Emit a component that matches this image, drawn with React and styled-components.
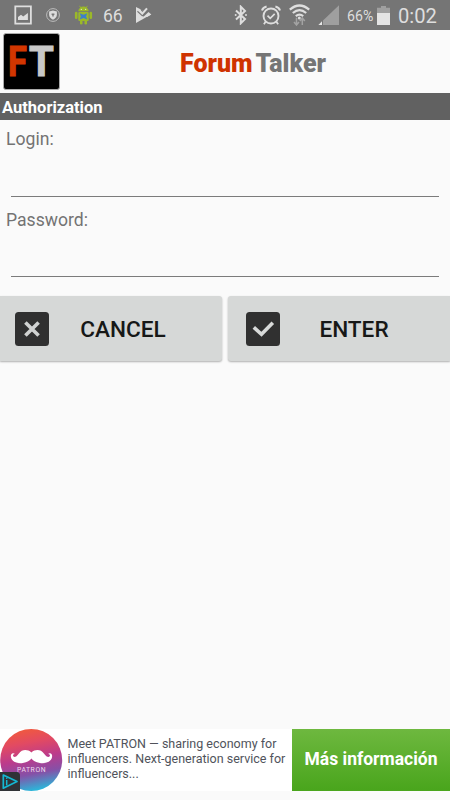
import React, { useState } from "react";
import styled, { createGlobalStyle } from "styled-components";

const App = () => {
  const [input, setInput] = useState({
    login: "",
    password: "",
  });

  const handleChangeInput = (e) => {
    setInput((prev) => {
      return {
        ...prev,
        [e.target.name]: e.target.value,
      };
    });
  };

  const handleCancel = () => {
    setInput({ login: "", password: "" });
  };

  return (
    <>
      <GlobalStyle />
      <Page>
        <StatusBar>
          <StatusGroup>
            <ImageIcon />
            <ShieldIcon />
            <AndroidIcon />
            <StatusText $size={19} $left={10} $width={19} $squeeze={0.92}>66</StatusText>
            <PlayCheckIcon />
          </StatusGroup>
          <StatusGroup>
            <BluetoothIcon />
            <AlarmIcon />
            <WifiIcon />
            <SignalIcon />
            <StatusText $size={14.6} $left={7} $width={28} $squeeze={0.97}>66%</StatusText>
            <BatteryIcon />
            <StatusText $size={20.6} $left={8} $width={39} $squeeze={0.98}>0:02</StatusText>
          </StatusGroup>
        </StatusBar>

        <Header>
          <Logo><span>F</span><span>T</span></Logo>
          <Title><b>Forum</b><b>Talker</b></Title>
        </Header>

        <SectionBar>Authorization</SectionBar>

        <Form>
          <Label htmlFor="login">Login:</Label>
          <Input
            type="text"
            id="login"
            name="login"
            value={input.login}
            onChange={handleChangeInput}
          />
          <Label htmlFor="password">Password:</Label>
          <Input
            type="password"
            id="password"
            name="password"
            value={input.password}
            onChange={handleChangeInput}
          />
        </Form>

        <Buttons>
          <CancelButton type="button" onClick={handleCancel}>
            <CancelIcon />
            <span>CANCEL</span>
          </CancelButton>
          <EnterButton type="button">
            <EnterIcon />
            <span>ENTER</span>
          </EnterButton>
        </Buttons>

        <Ad>
          <PatronLogo />
          <AdText>
            Meet PATRON — sharing economy for<br />
            influencers. Next-generation service for<br />
            influencers...
          </AdText>
          <AdButton>Más información</AdButton>
          <AdChoices />
        </Ad>
      </Page>
    </>
  );
};

export default App;

const ImageIcon = () => (
  <StatusIcon $left={14} width="18" height="20" viewBox="0 0 18 20">
    <path d="M1.3 1.3h15.6v17.4H1.3z" fill="none" stroke="#dedede" strokeWidth="1.8" />
    <path d="M4 15V12l3-2.2 2.2 1.8L13.9 8v7z" fill="#dedede" />
  </StatusIcon>
);

const ShieldIcon = () => (
  <StatusIcon $left={14} width="14" height="14" viewBox="0 0 14 14">
    <circle cx="7" cy="7" r="6.4" fill="none" stroke="#bcbcbc" strokeWidth="1" />
    <path d="M7 2.6l3.9 1v3c0 2.3-1.5 4.1-3.9 5.1-2.4-1-3.9-2.8-3.9-5.1v-3z" fill="#dcdcdc" />
    <path d="M5.6 5.4h2.8v1.5H7.7v1.6H6.3V6.9h-.7z" fill="#777" />
  </StatusIcon>
);

const AndroidIcon = () => (
  <StatusIcon $left={14} width="19" height="20" viewBox="0 0 19 20">
    <g fill="#9bb928">
      <path d="M4.3 6.3a5.2 4.7 0 0 1 10.4 0z" />
      <path d="M5.5.8l1.7 2.4M13.5.8l-1.7 2.4" stroke="#9bb928" strokeWidth=".9" />
      <rect x="4.3" y="7" width="10.4" height="9" rx="1" />
      <rect x=".9" y="6.8" width="2.6" height="7.2" rx="1.3" />
      <rect x="15.5" y="6.8" width="2.6" height="7.2" rx="1.3" />
      <rect x="6" y="14" width="2.5" height="5.5" rx="1.2" />
      <rect x="10.5" y="14" width="2.5" height="5.5" rx="1.2" />
    </g>
    <circle cx="7.3" cy="4.3" r=".6" fill="#eee" />
    <circle cx="11.7" cy="4.3" r=".6" fill="#eee" />
    <path d="M5.8 8.3l3.7 1.5 3.7-1.5-1.1 3.2 1.2 3-3.8-1.4-3.8 1.4 1.2-3z" fill="#3f80c8" />
  </StatusIcon>
);

const PlayCheckIcon = () => (
  <StatusIcon $left={13} width="17" height="18" viewBox="0 0 17 18">
    <path d="M1 1l15 7.6L1 17z" fill="#dedede" />
    <path d="M4.4 0L7.6 4.4 11 1v2l5 4.5L8.5 11z" fill="#757575" />
    <path d="M2.5 5.2l4.8 4.4L14.3 3" fill="none" stroke="#757575" strokeWidth="1.2" />
    <path d="M3.3 3.6l4.1 3.8 4.6-5" fill="none" stroke="#dedede" strokeWidth="2.1" />
    <path d="M8.2 11l5.3-5 2.8 2.6-4.2 2.4z" fill="#dedede" />
  </StatusIcon>
);

const BluetoothIcon = () => (
  <StatusIcon $left={0} width="14" height="20" viewBox="0 0 14 20">
    <path
      d="M2 5.5l9 8.6-4.2 4.2V1.7L11 5.9l-9 8.6"
      fill="none"
      stroke="#dedede"
      strokeWidth="2"
    />
    <circle cx="1.7" cy="10" r="1" fill="#dedede" />
    <circle cx="12" cy="10" r="1" fill="#dedede" />
  </StatusIcon>
);

const AlarmIcon = () => (
  <StatusIcon $left={13} width="20" height="21" viewBox="0 0 20 21">
    <g fill="none" stroke="#dedede">
      <circle cx="10" cy="11" r="7.5" strokeWidth="1.9" />
      <path d="M6.5 10.7l2.7 2.6 4.5-4.5" strokeWidth="1.7" />
      <path d="M1 5.5q.8-3.1 4.6-4M19 5.5q-.8-3.1-4.6-4" strokeWidth="2" />
      <path d="M4.9 16.3l-2 2.9M15.1 16.3l2 2.9" strokeWidth="1.8" />
    </g>
  </StatusIcon>
);

const WifiIcon = () => (
  <StatusIcon $left={8} width="21" height="22" viewBox="0 0 21 22">
    <g fill="none" stroke="#dedede" strokeWidth="2.2">
      <path d="M.8 5.6q9.7-8.2 19.4 0" />
      <path d="M3.8 9q6.7-5.6 13.4 0" />
      <path d="M6.8 12.2q3.7-3 7.4 0" />
    </g>
    <circle cx="10.3" cy="14" r="1.5" fill="#dedede" />
    <g fill="none" stroke="#a3a3a3" strokeWidth="1.5">
      <path d="M7.5 13.7v7M5 18l2.5 3L10 18" />
      <path d="M13.3 21v-6.7M10.8 17l2.5-3 2.5 3" />
    </g>
  </StatusIcon>
);

const SignalIcon = () => (
  <StatusIcon $left={8} width="22" height="20" viewBox="0 0 22 20">
    <path d="M21 .3V20H5V15.5z" fill="#9f9f9f" />
    <path d="M4 16.3V20H.4z" fill="#e8e8e8" />
  </StatusIcon>
);

const BatteryIcon = () => (
  <StatusIcon $left={2} width="13" height="19" viewBox="0 0 13 19">
    <path d="M4 0h5v1.8h4V7H0V1.8h4z" fill="#9f9f9f" />
    <path d="M0 7h13v12H0z" fill="#e4e4e4" />
  </StatusIcon>
);

const CancelIcon = () => (
  <svg width="34" height="34" viewBox="0 0 34 34">
    <rect width="34" height="34" rx="3.5" fill="#303030" />
    <path d="M10.4 10.4l13.2 13.2M23.6 10.4L10.4 23.6" stroke="#d0d2d1" strokeWidth="3.6" />
  </svg>
);

const EnterIcon = () => (
  <svg width="34" height="34" viewBox="0 0 34 34">
    <rect width="34" height="34" rx="3.5" fill="#303030" />
    <path d="M7.8 15.3l7.7 7L26.8 10.8" fill="none" stroke="#d8dad9" strokeWidth="3.6" />
  </svg>
);

const PatronLogo = () => (
  <svg width="63" height="62" viewBox="0 0 63 62">
    <defs>
      <linearGradient id="patron" x1="0.4" y1="0" x2="0.6" y2="1">
        <stop offset="0" stopColor="#f0593f" />
        <stop offset="0.22" stopColor="#e24a62" />
        <stop offset="0.48" stopColor="#bb3b8c" />
        <stop offset="0.72" stopColor="#8650a7" />
        <stop offset="1" stopColor="#25bddd" />
      </linearGradient>
    </defs>
    <circle cx="31.2" cy="31" r="31" fill="url(#patron)" />
    <path
      d="M31.4 23.4c-4-3.4-9.4-3.2-12.5 1-2.3 3.1-4.1 4.3-5.4 3.2-1-.8-.5-2.5 1.4-2.5
        -1.8-1.9-4.6-.5-4 2.9.8 4.8 6.5 6.8 12 6 4.3-.7 7-2.3 8.5-4.4
        1.5 2.1 4.2 3.7 8.5 4.4 5.5.8 11.4-1.2 12.2-6 .6-3.4-2.2-4.8-4-2.9
        1.9 0 2.4 1.7 1.4 2.5-1.3 1.1-3.3-.1-5.6-3.2-3.1-4.2-8.5-4.4-12.5-1z"
      fill="#fff"
    />
    <text
      x="17"
      y="43"
      fontFamily="Roboto, sans-serif"
      fontSize="6.8"
      textLength="28.5"
      fill="#eed9ee"
    >
      PATRON
    </text>
  </svg>
);

const AdChoices = () => (
  <AdBadge width="20" height="19" viewBox="0 0 20 19">
    <path d="M0 0h16.5q3.5 0 3.5 3.5V19H0z" fill="#303236" />
    <path d="M3.3 3L17 9.6 3.3 16.2z" fill="none" stroke="#14b7d2" strokeWidth="1.7" strokeLinejoin="round" />
    <path d="M6.7 8v5.4" stroke="#14b7d2" strokeWidth="1.5" />
    <circle cx="6.7" cy="6.2" r=".8" fill="#14b7d2" />
  </AdBadge>
);

const GlobalStyle = createGlobalStyle`
  * {
    box-sizing: border-box;
  }

  body {
    margin: 0;
    background: #fafafa;
    font-family: Roboto, "Liberation Sans", sans-serif;
  }
`;

const Page = styled.div`
  display: flex;
  flex-direction: column;
  width: 450px;
  height: 800px;
  padding-bottom: 9px;
  background: #fafafa;
  overflow: hidden;
`;

const StatusBar = styled.div`
  display: flex;
  justify-content: space-between;
  flex: none;
  height: 30px;
  padding-right: 13px;
  background: #757575;
`;

const StatusGroup = styled.div`
  display: flex;
  align-items: center;
`;

const StatusIcon = styled.svg`
  display: block;
  flex: none;
  margin-left: ${(props) => props.$left}px;
`;

const StatusText = styled.span`
  flex: none;
  width: ${(props) => props.$width}px;
  margin-left: ${(props) => props.$left}px;
  padding-top: 1px;
  color: #dedede;
  font-size: ${(props) => props.$size}px;
  line-height: 32px;
  white-space: nowrap;
  transform: scaleX(${(props) => props.$squeeze});
  transform-origin: left;
`;

const Header = styled.header`
  display: flex;
  align-items: center;
  flex: none;
  height: 63px;
  padding-left: 3px;
`;

const Logo = styled.div`
  display: flex;
  width: 57px;
  height: 57px;
  padding-left: 4px;
  border: 1px solid #aaa;
  border-radius: 3px;
  background: #000;
  color: #c8c8c8;
  font-size: 43px;
  font-weight: 700;
  line-height: 55px;

  span {
    -webkit-text-stroke: 1.2px currentColor;
    transform-origin: left;
  }

  span:first-child {
    width: 21px;
    color: #d23600;
    transform: scaleX(0.8);
  }

  span:last-child {
    width: 25px;
    transform: scaleX(0.93);
  }
`;

const Title = styled.h1`
  display: flex;
  gap: 3px;
  margin: 5px 0 0 120px;
  color: #757575;
  font-size: 25px;
  line-height: 30px;

  b:first-child {
    color: #cf3300;
  }
`;

const SectionBar = styled.div`
  flex: none;
  height: 27px;
  padding-left: 2px;
  background: #616161;
  color: #fff;
  font-size: 16.5px;
  font-weight: 700;
  line-height: 29px;
`;

const Form = styled.form`
  display: flex;
  flex-direction: column;
  flex: none;
  padding: 9px 11px 0;
`;

const Label = styled.label`
  height: 21px;
  margin-left: -5px;
  color: #737373;
  font-size: 17.6px;
  line-height: 21px;
`;

const Input = styled.input`
  height: 47px;
  margin: 0 0 13px;
  padding: 0 4px;
  border: 0;
  border-bottom: 1px solid #7b7b7b;
  outline: 0;
  background: transparent;
  color: #212121;
  font: 18px Roboto, sans-serif;

  &:last-child {
    height: 46px;
  }
`;

const Buttons = styled.div`
  display: flex;
  gap: 6px;
  flex: none;
  margin-top: 6px;
`;

const Button = styled.button`
  display: flex;
  align-items: center;
  height: 65px;
  padding: 0;
  border: 0;
  background: #d6d8d7;
  box-shadow: 0 1px 2px rgba(0, 0, 0, 0.3);
  color: #171817;
  font: 500 22.6px Roboto, sans-serif;
  text-align: center;

  span {
    flex: 1;
    padding-top: 2px;
  }
`;

const CancelButton = styled(Button)`
  width: 222px;
  padding: 0 25px 0 15px;
  border-radius: 0 3px 3px 0;
`;

const EnterButton = styled(Button)`
  width: 222px;
  padding: 0 22px 0 18px;
  border-radius: 3px 0 0 3px;
`;

const Ad = styled.div`
  display: flex;
  position: relative;
  flex: none;
  height: 62px;
  margin-top: auto;
  background: #fff;
`;

const AdText = styled.div`
  flex: 1;
  padding: 7px 0 0 4.5px;
  color: #50535b;
  font-size: 12.5px;
  line-height: 15px;
  white-space: nowrap;
`;

const AdButton = styled.div`
  width: 158px;
  background: linear-gradient(#6eb83f, #49a51c);
  color: #fff;
  font-size: 17.5px;
  font-weight: 700;
  line-height: 61px;
  text-align: center;
`;

const AdBadge = styled.svg`
  position: absolute;
  bottom: 0;
  left: 0;
`;
